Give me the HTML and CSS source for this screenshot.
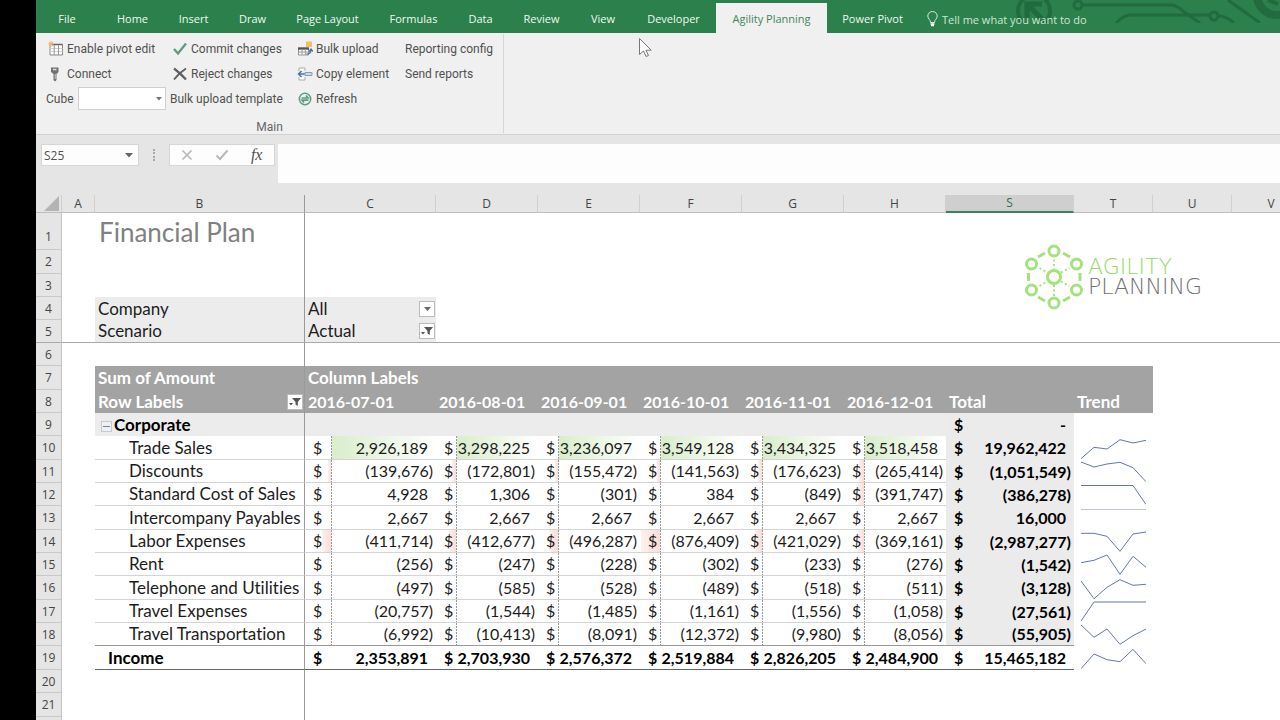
FILE: index.html
```html
<!DOCTYPE html>
<html lang="en">
<head>
<meta charset="utf-8">
<meta name="viewport" content="width=device-width, initial-scale=1">
<title>Financial Plan</title>
<link rel="stylesheet" href="styles.css">
</head>
<body>
<div class="app">
  <header class="tabbar">
    <svg class="circuit" width="270" height="23" viewBox="0 0 270 23" fill="none" stroke="#216b3e" stroke-width="3" aria-hidden="true">
      <circle cx="24" cy="11" r="16" stroke-width="4"/>
      <path d="M17 18V4H32M18 5L33 20" stroke-width="5"/>
      <circle cx="68" cy="5" r="4"/>
      <path d="M73 5H162Q168 6 174 12L190 23"/>
      <path d="M106 23Q114 15 120 15H180L199 15"/>
      <circle cx="204" cy="16" r="4"/>
      <path d="M209 16Q216 16 224 23M218 0L250 23"/>
      <circle cx="267" cy="-5" r="20" stroke-width="8"/>
      <path d="M258 0L268 4" stroke-width="4"/>
    </svg>
    <nav class="tabs">
      <button class="tab file">File</button>
      <button class="tab">Home</button>
      <button class="tab">Insert</button>
      <button class="tab">Draw</button>
      <button class="tab">Page Layout</button>
      <button class="tab">Formulas</button>
      <button class="tab">Data</button>
      <button class="tab">Review</button>
      <button class="tab">View</button>
      <button class="tab">Developer</button>
      <button class="tab active">Agility Planning</button>
      <button class="tab">Power Pivot</button>
      <button class="tell">
        <svg width="11" height="16" viewBox="0 0 11 16" fill="none" stroke="#d5eadd"><path d="M3.5 11.5C3.5 8.500.800 8 .800 5A4.700 4.500 0 0 1 10.200 5C10.200 8 7.500 8.500 7.500 11.500Z"/><path d="M3.500 13h4M4 14.500h3" stroke="#fff" stroke-width="1.300"/></svg>
        <span>Tell me what you want to do</span>
      </button>
    </nav>
  </header>

  <section class="ribbon">
    <div class="group">
      <div class="commands">
        <div class="stack">
          <button class="cmd pushed">
            <svg width="16" height="16" viewBox="0 0 16 16" fill="none"><path d="M2 3.500H14.500V14H2Z" fill="#fff" stroke="#8a8a8a"/><path d="M4 3.500H14.500" stroke="#666" stroke-width="1.500"/><path d="M2 7.500H14.500M2 10.500H14.500" stroke="#d0d0d0"/><path d="M6.200 4V14M10.500 4V14" stroke="#999"/><path d="M3 0V6M0 3H6M1 1L5 5M5 1L1 5" stroke="#f0b26b"/></svg>
            Enable pivot edit</button>
          <button class="cmd pushed">
            <svg width="16" height="16" viewBox="0 0 16 16"><path d="M3 1.500H10.500V6L8.500 8V14L7 15.500L5.500 14V8L3 6Z" fill="#707070"/><path d="M5 3.500H8.500" stroke="#ddd" stroke-width="1.500"/><path d="M7.200 8V13" stroke="#ccc"/></svg>
            Connect</button>
          <div class="cube">
            <label for="cube">Cube</label>
            <span class="combo"><select id="cube"><option></option></select><svg width="6" height="4" viewBox="0 0 6 4"><path d="M0 0H6L3 3.500Z" fill="#777"/></svg></span>
          </div>
        </div>
        <div class="stack">
          <button class="cmd">
            <svg width="16" height="16" viewBox="0 0 16 16" fill="none"><path d="M2 8L6 12.500L14 2.500" stroke="#5f9c80" stroke-width="2.400"/></svg>
            Commit changes</button>
          <button class="cmd">
            <svg width="16" height="16" viewBox="0 0 16 16" fill="none" stroke="#606060"><path d="M2 2.500Q8 7 14 13.500" stroke-width="2.200"/><path d="M14 2.500Q7 7 2 13.500" stroke-width="2"/></svg>
            Reject changes</button>
          <button class="cmd">Bulk upload template</button>
        </div>
        <div class="stack">
          <button class="cmd">
            <svg width="16" height="16" viewBox="0 0 16 16" fill="none"><path d="M9 .500H15V6H9Z" fill="#f3bd62"/><path d="M1.500 7.500H11.500V14H1.500Z" fill="#fff" stroke="#999"/><path d="M1 7.500H12" stroke="#555" stroke-width="2.400"/><path d="M1.500 11H11.500M5 8V14M8.300 8V14" stroke="#999"/><path d="M9.500 13Q14 13 14 9M12 10.500L14 8L16 10.500" stroke="#4d7096" stroke-width="1.300"/></svg>
            Bulk upload</button>
          <button class="cmd">
            <svg width="16" height="16" viewBox="0 0 16 16" fill="none"><path d="M2 5V2H8V5M2 11V14H8V11" fill="#fff" stroke="#aaa"/><path d="M1.500 8H9M4.500 5L1.500 8L4.500 11" stroke="#4976ae" stroke-width="1.500"/><path d="M8 6.500H15V9.500H8Z" fill="#c8d8ee" stroke="#8b9db5"/></svg>
            Copy element</button>
          <button class="cmd">
            <svg width="16" height="16" viewBox="0 0 16 16" fill="none" stroke="#5a9f80"><circle cx="8" cy="8" r="5.700" stroke-width="1.500"/><path d="M4.500 7H11L9 4.500M11.500 9.200H5L7 11.500" stroke-width="1.700"/></svg>
            Refresh</button>
        </div>
        <div class="stack">
          <button class="cmd">Reporting config</button>
          <button class="cmd">Send reports</button>
        </div>
      </div>
      <div class="caption">Main</div>
    </div>
  </section>

  <section class="formula">
    <div class="namebox">
      <input value="S25" aria-label="Name box">
      <svg width="8" height="5" viewBox="0 0 8 5"><path d="M0 0H8L4 4.500Z" fill="#666"/></svg>
    </div>
    <svg class="dots" width="4" height="12" viewBox="0 0 4 12" fill="#a8a8a8"><path d="M1 0h2v2H1zM1 3h2v2H1zM1 7h2v2H1zM1 10h2v2H1z"/></svg>
    <div class="fxbox">
      <button aria-label="Cancel"><svg width="12" height="12" viewBox="0 0 12 12" fill="none" stroke="#b8b8b8" stroke-width="1.600"><path d="M1.500 1.500L10.500 10.500M10.500 1.500L1.500 10.500"/></svg></button>
      <button aria-label="Enter"><svg width="14" height="12" viewBox="0 0 14 12" fill="none" stroke="#b8b8b8" stroke-width="2"><path d="M1.500 6.500L5 10L12.500 1.500"/></svg></button>
      <button class="fx">fx</button>
    </div>
    <textarea class="entry" aria-label="Formula bar"></textarea>
  </section>

  <main class="sheet">
    <table class="grid">
      <colgroup><col class="c-row"><col class="c-a"><col class="c-b"><col class="c-c"><col class="c-m"><col class="c-m"><col class="c-m"><col class="c-m"><col class="c-m"><col class="c-s"><col class="c-t"><col class="c-t"><col class="c-t"></colgroup>
      <thead>
        <tr><th class="corner"><svg width="15" height="15" viewBox="0 0 15 15"><path d="M15 0V15H0Z" fill="#b4b4b4"/></svg></th><th>A</th><th class="split">B</th><th>C</th><th>D</th><th>E</th><th>F</th><th>G</th><th>H</th><th class="picked">S</th><th>T</th><th>U</th><th>V</th></tr>
      </thead>
      <tbody>
        <tr class="first"><th>1</th><td></td><td class="split title">Financial Plan</td><td colspan="10"></td></tr>
        <tr class="tall"><th>2</th><td></td><td class="split"></td><td colspan="10"></td></tr>
        <tr><th>3</th><td></td><td class="split"></td><td colspan="10"></td></tr>
        <tr><th>4</th><td></td><td class="split shade">Company</td><td class="shade"><div class="pick">All<button class="drop" aria-label="Company filter"><svg width="7" height="4" viewBox="0 0 7 4"><path d="M0 0H7L3.500 4Z" fill="#666"/></svg></button></div></td><td colspan="9"></td></tr>
        <tr class="frozen"><th>5</th><td></td><td class="split shade">Scenario</td><td class="shade"><div class="pick">Actual<button class="drop" aria-label="Scenario filter"><svg width="12" height="8" viewBox="0 0 12 8" fill="#555"><path d="M3 0H12L8.800 4V8L6.500 6.500V4ZM0 5H4L2 7.500Z"/></svg></button></div></td><td colspan="9"></td></tr>
        <tr><th>6</th><td></td><td class="split"></td><td colspan="10"></td></tr>
        <tr class="tall head"><th>7</th><td class="blank"></td><td class="split">Sum of Amount</td><td colspan="8">Column Labels</td><td class="blank"></td><td class="blank"></td></tr>
        <tr class="head"><th>8</th><td class="blank"></td><td class="split"><div class="pick">Row Labels<button class="drop" aria-label="Row filter"><svg width="12" height="8" viewBox="0 0 12 8" fill="#555"><path d="M3 0H12L8.800 4V8L6.500 6.500V4ZM0 5H4L2 7.500Z"/></svg></button></div></td><td class="date">2016-07-01</td><td class="date">2016-08-01</td><td class="date">2016-09-01</td><td class="date">2016-10-01</td><td class="date">2016-11-01</td><td class="date">2016-12-01</td><td>Total</td><td>Trend</td><td class="blank"></td><td class="blank"></td></tr>
        <tr><th>9</th><td></td><td class="split shade branch"><button class="fold" aria-label="Collapse Corporate"></button>Corporate</td><td class="shade" colspan="6"></td><td class="sum dash"><span class="cur">$</span>-</td><td></td><td></td><td></td></tr>

        <tr class="tall data"><th>10</th><td></td><td class="split leaf">Trade Sales</td><td class="wide up pos"><span class="cur">$</span>2,926,189</td><td class="up pos"><span class="cur">$</span>3,298,225</td><td class="up pos"><span class="cur">$</span>3,236,097</td><td class="up pos"><span class="cur">$</span>3,549,128</td><td class="up pos"><span class="cur">$</span>3,434,325</td><td class="up pos"><span class="cur">$</span>3,518,458</td><td class="sum pos"><span class="cur">$</span>19,962,422</td><td class="trend"><svg viewBox="0 0 65 23"><path d="M0 21.700L13 10.300L26 12L39 2.700L52 6L65 3.300"/></svg></td><td></td><td></td></tr>
        <tr class="data"><th>11</th><td></td><td class="split leaf">Discounts</td><td class="wide down" style="--bar:3px"><span class="cur">$</span>(139,676)</td><td class="down" style="--bar:4px"><span class="cur">$</span>(172,801)</td><td class="down" style="--bar:3px"><span class="cur">$</span>(155,472)</td><td class="down" style="--bar:3px"><span class="cur">$</span>(141,563)</td><td class="down" style="--bar:4px"><span class="cur">$</span>(176,623)</td><td class="down" style="--bar:5px"><span class="cur">$</span>(265,414)</td><td class="sum"><span class="cur">$</span>(1,051,549)</td><td class="trend"><svg viewBox="0 0 65 23"><path d="M0 2L13 7L26 4L39 2.300L52 7.700L65 21.700"/></svg></td><td></td><td></td></tr>
        <tr class="data"><th>12</th><td></td><td class="split leaf">Standard Cost of Sales</td><td class="wide pos"><span class="cur">$</span>4,928</td><td class="pos"><span class="cur">$</span>1,306</td><td><span class="cur">$</span>(301)</td><td class="pos"><span class="cur">$</span>384</td><td><span class="cur">$</span>(849)</td><td class="down" style="--bar:6px"><span class="cur">$</span>(391,747)</td><td class="sum"><span class="cur">$</span>(386,278)</td><td class="trend"><svg viewBox="0 0 65 23"><path d="M0 2.500H52L65 21.500"/></svg></td><td></td><td></td></tr>
        <tr class="tall data"><th>13</th><td></td><td class="split leaf">Intercompany Payables</td><td class="wide pos"><span class="cur">$</span>2,667</td><td class="pos"><span class="cur">$</span>2,667</td><td class="pos"><span class="cur">$</span>2,667</td><td class="pos"><span class="cur">$</span>2,667</td><td class="pos"><span class="cur">$</span>2,667</td><td class="pos"><span class="cur">$</span>2,667</td><td class="sum pos"><span class="cur">$</span>16,000</td><td class="trend flat"><svg viewBox="0 0 65 23"><path d="M0 2.500H65"/></svg></td><td></td><td></td></tr>
        <tr class="data"><th>14</th><td></td><td class="split leaf">Labor Expenses</td><td class="wide down" style="--bar:9px"><span class="cur">$</span>(411,714)</td><td class="down" style="--bar:7px"><span class="cur">$</span>(412,677)</td><td class="down" style="--bar:9px"><span class="cur">$</span>(496,287)</td><td class="down" style="--bar:19px"><span class="cur">$</span>(876,409)</td><td class="down" style="--bar:7px"><span class="cur">$</span>(421,029)</td><td class="down" style="--bar:6px"><span class="cur">$</span>(369,161)</td><td class="sum"><span class="cur">$</span>(2,987,277)</td><td class="trend"><svg viewBox="0 0 65 23"><path d="M0 3.300H13L26 6.300L39 21.300L52 4L65 2"/></svg></td><td></td><td></td></tr>
        <tr class="data"><th>15</th><td></td><td class="split leaf">Rent</td><td class="wide"><span class="cur">$</span>(256)</td><td><span class="cur">$</span>(247)</td><td><span class="cur">$</span>(228)</td><td><span class="cur">$</span>(302)</td><td><span class="cur">$</span>(233)</td><td><span class="cur">$</span>(276)</td><td class="sum"><span class="cur">$</span>(1,542)</td><td class="trend"><svg viewBox="0 0 65 23"><path d="M0 9.700L13 7.300L26 2L39 21.300L52 3.300L65 14.300"/></svg></td><td></td><td></td></tr>
        <tr class="tall data"><th>16</th><td></td><td class="split leaf">Telephone and Utilities</td><td class="wide"><span class="cur">$</span>(497)</td><td><span class="cur">$</span>(585)</td><td><span class="cur">$</span>(528)</td><td><span class="cur">$</span>(489)</td><td><span class="cur">$</span>(518)</td><td><span class="cur">$</span>(511)</td><td class="sum"><span class="cur">$</span>(3,128)</td><td class="trend"><svg viewBox="0 0 65 23"><path d="M0 4L13 21.700L26 10.300L39 2.700L52 8.300L65 7.300"/></svg></td><td></td><td></td></tr>
        <tr class="data"><th>17</th><td></td><td class="split leaf">Travel Expenses</td><td class="wide"><span class="cur">$</span>(20,757)</td><td><span class="cur">$</span>(1,544)</td><td><span class="cur">$</span>(1,485)</td><td><span class="cur">$</span>(1,161)</td><td><span class="cur">$</span>(1,556)</td><td><span class="cur">$</span>(1,058)</td><td class="sum"><span class="cur">$</span>(27,561)</td><td class="trend"><svg viewBox="0 0 65 23"><path d="M0 21L13 2H65"/></svg></td><td></td><td></td></tr>
        <tr class="data last"><th>18</th><td></td><td class="split leaf">Travel Transportation</td><td class="wide"><span class="cur">$</span>(6,992)</td><td><span class="cur">$</span>(10,413)</td><td><span class="cur">$</span>(8,091)</td><td><span class="cur">$</span>(12,372)</td><td><span class="cur">$</span>(9,980)</td><td><span class="cur">$</span>(8,056)</td><td class="sum"><span class="cur">$</span>(55,905)</td><td class="trend"><svg viewBox="0 0 65 23"><path d="M0 2L13 14.300L26 6L39 21.300L52 12.700L65 6"/></svg></td><td></td><td></td></tr>
        <tr class="tall income"><th>19</th><td></td><td class="split name">Income</td><td class="pos"><span class="cur">$</span>2,353,891</td><td class="pos"><span class="cur">$</span>2,703,930</td><td class="pos"><span class="cur">$</span>2,576,372</td><td class="pos"><span class="cur">$</span>2,519,884</td><td class="pos"><span class="cur">$</span>2,826,205</td><td class="pos"><span class="cur">$</span>2,484,900</td><td class="pos"><span class="cur">$</span>15,465,182</td><td class="trend"><svg viewBox="0 0 65 23"><path d="M0 21.700L13 7L26 12.700L39 14.700L52 2.300L65 16.700"/></svg></td><td></td><td></td></tr>
        <tr><th>20</th><td></td><td class="split"></td><td colspan="10"></td></tr>
        <tr class="tall"><th>21</th><td></td><td class="split"></td><td colspan="10"></td></tr>
        <tr class="tall"><th></th><td></td><td class="split"></td><td colspan="10"></td></tr>
      </tbody>
    </table>

    <div class="logo">
      <svg width="60" height="66" viewBox="0 0 60 66" fill="none" stroke="#a3e27d">
        <g stroke-width="3"><circle cx="30" cy="33" r="6.500"/><circle cx="30" cy="7" r="5"/><circle cx="30" cy="59" r="5"/><circle cx="7.500" cy="20" r="5"/><circle cx="52.500" cy="20" r="5"/><circle cx="7.500" cy="46" r="5"/><circle cx="52.500" cy="46" r="5"/>
        <path d="M14 13L21 9M39 9L46 13M4.500 29V37M56 29V37M14 53L21 57M39 57L46 53"/></g>
        <path d="M30 15.500V25M30 41V53M15.500 24L23 28.500M37 28.500L45.500 24M15.500 42L23 37.500M37 37.500L45.500 42" stroke-width="2" stroke-dasharray="2 2.500"/>
      </svg>
      <div class="words"><span class="agility">AGILITY</span><span class="planning">PLANNING</span></div>
    </div>
  </main>

  <svg class="pointer" width="13" height="20" viewBox="0 0 13 20"><path d="M.500 .500V16.500L4.500 13L7 18.500L9.500 17.500L7 12.200H12.200Z" fill="#fff" stroke="#777"/></svg>
</div>
</body>
</html>
```
FILE: styles.css
```css
* { box-sizing: border-box; }

body {
  margin: 0;
  background: #000;
  color: #505050;
  font-family: "Open Sans", "Noto Sans", sans-serif;
  font-size: 12px;
}

button, input, select, textarea {
  margin: 0;
  padding: 0;
  border: 0;
  background: none;
  color: inherit;
  font: inherit;
}

.app {
  position: relative;
  display: flex;
  flex-direction: column;
  height: 100vh;
  margin-left: 36px;
  overflow: hidden;
  background: #e5e5e5;
}

/* Tab bar */
.tabbar {
  position: relative;
  background: #2b804b;
  color: #f1f8f3;
  font-size: 11px;
}

.circuit {
  position: absolute;
  top: 0;
  right: 0;
}

.tabs {
  position: relative;
  display: grid;
  grid-template-columns: 66px 61px 61px 57px 93px 79px 55px 67px 56px 85px 111px 91px 1fr;
  height: 33px;
  padding-top: 3px;
}

.tab {
  white-space: nowrap;
}

.tab.file { padding-right: 4px; }

.tab.active {
  background: #f0f0f0;
  color: #3f8560;
}

.tell {
  display: flex;
  align-items: center;
  gap: 4px;
  padding: 2px 0 0 9px;
  color: #cfe6d7;
  font-size: 11px;
  white-space: nowrap;
}

/* Ribbon */
.ribbon {
  display: flex;
  height: 102px;
  padding: 1px 0;
  border-bottom: 1px solid #d2d2d2;
  background: #f0f0f0;
  font-family: Roboto, "Open Sans", sans-serif;
}

.group {
  display: flex;
  flex-direction: column;
  justify-content: space-between;
  width: 468px;
  padding: 0 10px;
  border-right: 1px solid #d6d6d6;
}

.commands {
  display: grid;
  grid-template-columns: 124px 127px 108px 1fr;
}

.stack {
  display: grid;
  grid-template-rows: repeat(3, 25px);
  padding-top: 2px;
}

.cmd {
  display: flex;
  align-items: center;
  gap: 3px;
  white-space: nowrap;
}

.cmd svg { flex: none; }
.stack:nth-child(2) .cmd:has(svg) { padding-left: 2px; }
.pushed { padding-left: 2px; }

.cube {
  display: flex;
  align-items: center;
  gap: 4px;
}

.combo {
  display: flex;
  align-items: center;
  width: 88px;
  height: 23px;
  padding-right: 3px;
  border: 1px solid #d0d0d0;
  background: #fff;
}

.combo select {
  flex: 1;
  align-self: stretch;
  min-width: 0;
  appearance: none;
}

.caption {
  color: #666;
  font-size: 12px;
  line-height: 12px;
  text-align: center;
}

/* Formula bar */
.formula {
  display: flex;
  align-items: flex-start;
  height: 60px;
  padding: 9px 0 0 5px;
}

.namebox, .fxbox {
  display: flex;
  align-items: center;
  height: 22px;
  border: 1px solid #d6d6d6;
  background: #fdfdfd;
}

.namebox { width: 98px; padding: 0 5px 0 2px; }
.namebox input { flex: 1; min-width: 0; }
.dots { margin: 5px 13px 0; }
.fxbox { width: 106px; }
.fxbox button { flex: 1; }
.fxbox svg { display: block; margin: auto; }

.fxbox .fx {
  font-family: "Liberation Serif", serif;
  font-size: 16px;
  font-style: italic;
  line-height: 18px;
}

.entry {
  flex: 1;
  height: 39px;
  margin-left: 3px;
  background: #fdfdfd;
  resize: none;
}

/* Sheet */
.sheet {
  position: relative;
  flex: 1;
  overflow: hidden;
  background: #fff;
}

.grid {
  width: 1275px;
  table-layout: fixed;
  border-spacing: 0;
  color: #1c1c1c;
  font-family: Lato, sans-serif;
  font-size: 17px;
  font-variant-ligatures: none;
  line-height: 20px;
}

.c-row { width: 26px; }
.c-a { width: 33px; }
.c-b { width: 210px; }
.c-c { width: 131px; }
.c-m { width: 102px; }
.c-s { width: 128px; }
.c-t { width: 79px; }

.grid th {
  padding: 0;
  background: #e5e5e5;
  color: #444;
  font-family: "Open Sans", "Noto Sans", sans-serif;
  font-size: 12px;
  font-weight: 400;
  line-height: 17px;
}

.grid thead th {
  height: 18px;
  border-right: 1px solid #d0d0d0;
  border-bottom: 1px solid #bdbdbd;
}

.grid thead .corner { padding-right: 2px; line-height: 0; text-align: right; }

.grid thead .picked {
  border-bottom: 2px solid #3b8459;
  background: #cfcfcf;
  color: #3a6b4e;
  line-height: 16px;
}

.grid tbody tr { height: 23px; }
.grid tbody .tall { height: 24px; }
.grid tbody .first { height: 37px; }

.grid tbody th {
  border-right: 1px solid #c4c4c4;
  border-bottom: 1px solid #c8c8c8;
}

.first th { padding-top: 10px; }

.grid td {
  padding: 0 0 0 3px;
  white-space: nowrap;
}

.grid .split { border-right: 1px solid #999; }

.grid .title {
  padding: 0 0 0 4px;
  color: #808080;
  font-size: 26px;
  line-height: 32px;
}

.grid .frozen th, .frozen td { border-bottom: 1px solid #aaa; }
.grid .shade { background: #ececec; }

.pick {
  display: flex;
  align-items: center;
  justify-content: space-between;
}

.drop {
  display: grid;
  place-items: center;
  width: 16px;
  height: 16px;
  margin-right: 1px;
  border: 1px solid #bbb;
  background: #fff;
}

.head td {
  background: #a3a3a3;
  color: #fff;
  font-weight: 700;
}

.head .date { font-size: 16px; }
.head .blank { background: none; }

.grid .branch { padding-left: 6px; font-weight: 700; color: #000; }

.fold {
  width: 11px;
  height: 11px;
  margin-right: 2px;
  border: 1px solid #c5c9d4;
  background: linear-gradient(#7780a0, #7780a0) center / 7px 1px no-repeat #f0f1f5;
}

.data td, .income td, .grid .sum {
  padding: 0 3px 0 8px;
  font-size: 16px;
  text-align: right;
}

.cur { float: left; }

.data td:nth-child(n+3):nth-child(-n+9) { border-bottom: 1px solid #d4d4d4; }

.data td:nth-child(n+4):nth-child(-n+9) {
  --axis: 20px;
  --line: repeating-linear-gradient(#999 0 2px, transparent 2px 3px) var(--axis) 0 / 1px 100% no-repeat;
  background: var(--line);
}

.data td.wide:nth-child(4) { --axis: 26px; }

.data td.up:nth-child(n+4) {
  background: var(--line), linear-gradient(90deg, #d9edcb, #fff) calc(var(--axis) + 1px) 0 / 80px 100% no-repeat;
}

.data td.up.wide:nth-child(4) {
  background: var(--line), linear-gradient(90deg, #d9edcb, #fff) 27px 0 / 104px 100% no-repeat;
}

.data td.down:nth-child(n+4) {
  background: var(--line), linear-gradient(270deg, #fadcd7, #fdf1ef) calc(var(--axis) - var(--bar)) 0 / var(--bar) 100% no-repeat;
}

.data td.pos, .income td.pos { padding-right: 8px; }
.grid td.dash { padding-right: 8px; }

.data td.leaf, .income td.name { font-size: 17px; text-align: left; }
.data td.leaf { padding: 0 0 0 34px; }
.income td.name { padding-left: 13px; }

.grid .sum {
  background: #ebebeb;
  color: #000;
  font-weight: 700;
}

.data.last td:nth-child(n+3):nth-child(-n+10) { border-bottom: 1px solid #999; }

.income td { color: #000; font-weight: 700; }
.income td:nth-child(n+3):nth-child(-n+10) { border-bottom: 1px solid #666; }

.grid td.trend { padding: 0 7px; }

.trend svg {
  display: block;
  width: 65px;
  height: 23px;
  fill: none;
  stroke: #6379a5;
}

.trend.flat svg { stroke: #c0c5cf; }

/* Logo floating over the cells */
.logo {
  position: absolute;
  top: 49px;
  left: 988px;
  display: flex;
  align-items: center;
  gap: 4px;
}

.words {
  display: flex;
  flex-direction: column;
  font-family: "DejaVu Sans", sans-serif;
  font-size: 22px;
  font-weight: 200;
  line-height: 20px;
}

.agility { color: #8fdc63; }
.planning { color: #707070; }

.pointer {
  position: absolute;
  top: 38px;
  left: 603px;
}
```
